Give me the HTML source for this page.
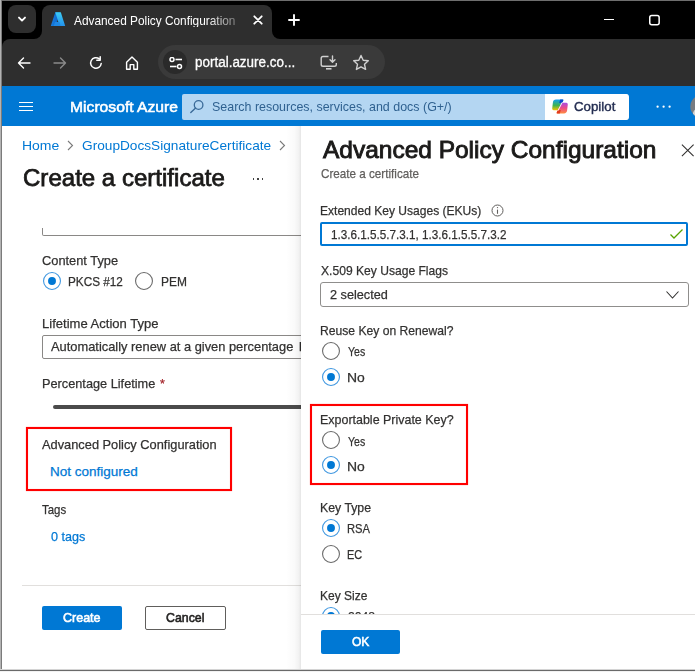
<!DOCTYPE html>
<html><head><meta charset="utf-8">
<style>
*{box-sizing:border-box;margin:0;padding:0}
html,body{width:695px;height:672px;overflow:hidden;background:#fff;font-family:"Liberation Sans",sans-serif;position:relative}
.a{position:absolute}
.t{position:absolute;white-space:nowrap;line-height:1;transform-origin:0 0}
</style></head><body>
<div class="a" style="left:0px;top:0px;width:695px;height:86px;background:#000"></div>
<div class="a" style="left:8px;top:5px;width:28px;height:28px;background:#2e2e2e;border-radius:8px"></div>
<svg class="a" style="left:16px;top:13px;" width="12" height="12" viewBox="0 0 12 12"><path d="M3 4.6 L6 7.6 L9 4.6" stroke="#fff" stroke-width="1.9" fill="none" stroke-linecap="round" stroke-linejoin="round"/></svg>
<div class="a" style="left:2px;top:39px;width:693px;height:47px;background:#2e2e2e;border-top-left-radius:8px"></div>
<div class="a" style="left:42px;top:5px;width:230px;height:40px;background:#2e2e2e;border-radius:8px 8px 0 0"></div>
<div class="a" style="left:34px;top:31px;width:8px;height:8px;background:#2e2e2e"></div>
<div class="a" style="left:34px;top:31px;width:8px;height:8px;background:#000;border-bottom-right-radius:8px"></div>
<div class="a" style="left:272px;top:31px;width:8px;height:8px;background:#2e2e2e"></div>
<div class="a" style="left:272px;top:31px;width:8px;height:8px;background:#000;border-bottom-left-radius:8px"></div>
<svg class="a" style="left:50px;top:12px;" width="16" height="15" viewBox="0 0 16 15"><defs><linearGradient id="g1" x1="0" y1="0" x2="1" y2="0"><stop offset="0" stop-color="#1a7fe0"/><stop offset="1" stop-color="#0a5cc2"/></linearGradient><linearGradient id="g2" x1="0" y1="0" x2="0" y2="1"><stop offset="0" stop-color="#3ccbf4"/><stop offset="1" stop-color="#2492eb"/></linearGradient></defs><path d="M0.8 14 L5.3 0.3 L10 0.3 L5.8 14 Z" fill="url(#g1)"/><path d="M5.3 0.3 L10.8 0.3 L15.2 14 L9.6 14 Z" fill="url(#g2)"/><path d="M5 10 L9.5 10 L10.6 14 L3.6 14 Z" fill="#1e88e5"/></svg>
<div class="t" style="left:74.20px;top:14px;font-size:13px;font-weight:normal;color:#ffffff;transform:scaleX(0.9119);-webkit-mask-image:linear-gradient(90deg,#000 82%,rgba(0,0,0,.35) 100%);">Advanced Policy Configuration</div>
<svg class="a" style="left:253px;top:15px;" width="10" height="10" viewBox="0 0 10 10"><path d="M1.3 1.3 L8.7 8.7 M8.7 1.3 L1.3 8.7" stroke="#fff" stroke-width="1.8" stroke-linecap="round"/></svg>
<svg class="a" style="left:288px;top:14px;" width="12" height="12" viewBox="0 0 12 12"><path d="M6 1 V11 M1 6 H11" stroke="#fff" stroke-width="1.9" stroke-linecap="round"/></svg>
<div class="a" style="left:604px;top:19px;width:10px;height:1px;background:#fff"></div>
<svg class="a" style="left:648px;top:14px;" width="13" height="12" viewBox="0 0 13 12"><rect x="1.75" y="1.45" width="9.4" height="9.3" rx="2" stroke="#fff" stroke-width="1.5" fill="none"/></svg>
<svg class="a" style="left:17px;top:56px;" width="14" height="14" viewBox="0 0 14 14"><path d="M13 7 H1.5 M6.5 2 L1.5 7 L6.5 12" stroke="#fff" stroke-width="1.4" fill="none" stroke-linecap="round" stroke-linejoin="round"/></svg>
<svg class="a" style="left:53px;top:56px;" width="14" height="14" viewBox="0 0 14 14"><path d="M1 7 H12.5 M7.5 2 L12.5 7 L7.5 12" stroke="#8a8a8a" stroke-width="1.4" fill="none" stroke-linecap="round" stroke-linejoin="round"/></svg>
<svg class="a" style="left:89px;top:56px;" width="14" height="14" viewBox="0 0 14 14"><path d="M12.2 7.5 A5.3 5.3 0 1 1 10.3 2.9" stroke="#fff" stroke-width="1.5" fill="none" stroke-linecap="round"/><path d="M11.2 0.8 V4.2 H7.8" stroke="#fff" stroke-width="1.5" fill="none" stroke-linecap="round" stroke-linejoin="round"/></svg>
<svg class="a" style="left:124px;top:56px;" width="15" height="14" viewBox="0 0 15 14"><path d="M2.6 6.2 L8 1 L13.4 6.2 V13.2 H9.8 V8.6 H6.2 V13.2 H2.6 Z" stroke="#fff" stroke-width="1.4" fill="none" stroke-linejoin="round"/></svg>
<div class="a" style="left:158px;top:45px;width:227px;height:34px;background:#3a3a3a;border-radius:17px"></div>
<div class="a" style="left:163px;top:50px;width:24px;height:24px;background:#2a2a2a;border-radius:12px"></div>
<svg class="a" style="left:168.7px;top:56.7px;" width="14" height="13" viewBox="0 0 14 13"><circle cx="3" cy="2.5" r="2" stroke="#fff" stroke-width="1.5" fill="none"/><path d="M6.5 2.5 H13" stroke="#fff" stroke-width="1.6"/><circle cx="10.5" cy="9.5" r="2" stroke="#fff" stroke-width="1.5" fill="none"/><path d="M1 9.5 H7.5" stroke="#fff" stroke-width="1.6"/></svg>
<div class="t" style="left:195.40px;top:55px;font-size:14px;font-weight:normal;color:#ffffff;-webkit-text-stroke:0.3px #ffffff;transform:scaleX(0.9606);">portal.azure.co...</div>
<svg class="a" style="left:320px;top:55px;" width="18" height="15" viewBox="0 0 18 15"><path d="M8.5 1.5 H3 Q1.2 1.5 1.2 3.3 V9.5 Q1.2 11.3 3 11.3 H14.5 Q16.3 11.3 16.3 9.5 V8" stroke="#d0d0d0" stroke-width="1.4" fill="none"/><path d="M12.5 1 V7 M10 4.8 L12.5 7.3 L15 4.8" stroke="#d0d0d0" stroke-width="1.4" fill="none" stroke-linecap="round" stroke-linejoin="round"/><path d="M6 13.8 H11.5" stroke="#d0d0d0" stroke-width="1.6"/></svg>
<svg class="a" style="left:352px;top:54px;" width="18" height="17" viewBox="0 0 18 17"><path d="M9 1.5 L11.2 6.3 L16.3 6.8 L12.5 10.3 L13.6 15.4 L9 12.8 L4.4 15.4 L5.5 10.3 L1.7 6.8 L6.8 6.3 Z" stroke="#d0d0d0" stroke-width="1.4" fill="none" stroke-linejoin="round"/></svg>
<div class="a" style="left:2px;top:86px;width:693px;height:40px;background:#0078d4"></div>
<div class="a" style="left:19px;top:102px;width:14px;height:1.3px;background:#fff"></div>
<div class="a" style="left:19px;top:106px;width:14px;height:1.3px;background:#fff"></div>
<div class="a" style="left:19px;top:110px;width:14px;height:1.3px;background:#fff"></div>
<div class="t" style="left:70.15px;top:99px;font-size:15px;font-weight:normal;color:#ffffff;-webkit-text-stroke:0.55px #ffffff;transform:scaleX(1.0451);">Microsoft Azure</div>
<div class="a" style="left:182px;top:94px;width:446px;height:26px;background:#b4d6f2;border-radius:2px"></div>
<div class="a" style="left:545px;top:94px;width:84px;height:26px;background:#fff;border-radius:0 3px 3px 0"></div>
<svg class="a" style="left:189px;top:99px;" width="16" height="16" viewBox="0 0 16 16"><circle cx="9.6" cy="6" r="4.3" stroke="#3a6a98" stroke-width="1.3" fill="none"/><path d="M6.6 9 L1.8 13.6" stroke="#3a6a98" stroke-width="1.4" stroke-linecap="round"/></svg>
<div class="t" style="left:212.28px;top:100px;font-size:13.5px;font-weight:normal;color:#2f6190;transform:scaleX(0.9220);">Search resources, services, and docs (G+/)</div>
<svg class="a" style="left:548px;top:96px;" width="24" height="22" viewBox="0 0 24 22"><defs><linearGradient id="c1" x1="0" y1="0" x2="0" y2="1"><stop offset="0" stop-color="#139ff0"/><stop offset="0.55" stop-color="#3fb34f"/><stop offset="1" stop-color="#f4c300"/></linearGradient><linearGradient id="c2" x1="0" y1="0" x2="0" y2="1"><stop offset="0" stop-color="#a84ce2"/><stop offset="0.5" stop-color="#ec4c86"/><stop offset="1" stop-color="#ff8b40"/></linearGradient></defs><path d="M8 3.6 L14.6 3.6 Q15.8 3.6 15.2 4.8 L10.8 13.6 Q10.4 14.2 9.6 14.2 L5.6 14.2 Q4.1 14.2 4.2 12.6 L4.9 6.4 Q5.3 3.6 8 3.6 Z" fill="url(#c1)"/><path d="M12.2 3.6 H14.6 Q15.8 3.6 15.2 4.8 L14.1 7 H11.2 Z" fill="#0a45cc"/><path d="M16 17.4 L9.4 17.4 Q8.2 17.4 8.8 16.2 L13.2 7.4 Q13.6 6.8 14.4 6.8 L18.4 6.8 Q19.9 6.8 19.8 8.4 L19.1 14.6 Q18.7 17.4 16 17.4 Z" fill="url(#c2)"/><path d="M11.8 17.4 H9.4 Q8.2 17.4 8.8 16.2 L9.9 14 H12.8 Z" fill="#e23c1c"/><path d="M14.3 6.2 L9.9 14.8" stroke="#fff" stroke-width="0.9"/></svg>
<div class="t" style="left:573.50px;top:100px;font-size:13.5px;font-weight:normal;color:#242e52;-webkit-text-stroke:0.4px #242e52;transform:scaleX(0.9837);">Copilot</div>
<svg class="a" style="left:650px;top:100px;" width="26" height="14" viewBox="0 0 26 14"><circle cx="7.6" cy="6.65" r="1.15" fill="#fff"/><circle cx="13.6" cy="6.65" r="1.15" fill="#fff"/><circle cx="19.6" cy="6.65" r="1.15" fill="#fff"/></svg>
<svg class="a" style="left:688px;top:93px;" width="27" height="27" viewBox="0 0 27 27"><defs><clipPath id="av"><circle cx="13.7" cy="13.5" r="11.4"/></clipPath></defs><circle cx="13.7" cy="13.5" r="11.4" fill="#777b81"/><ellipse cx="8.5" cy="21" rx="3.6" ry="4.6" fill="#d4d4d4" clip-path="url(#av)"/></svg>
<div class="t" style="left:21.71px;top:139px;font-size:13.5px;font-weight:normal;color:#0078d4;transform:scaleX(1.0357);">Home</div>
<svg class="a" style="left:66px;top:140px;" width="9" height="11" viewBox="0 0 9 11"><path d="M2 1 L6.5 5.5 L2 10" stroke="#7a7a7a" stroke-width="1.1" fill="none"/></svg>
<div class="t" style="left:81.90px;top:139px;font-size:13.5px;font-weight:normal;color:#0078d4;transform:scaleX(1.0123);">GroupDocsSignatureCertificate</div>
<svg class="a" style="left:278px;top:140px;" width="9" height="11" viewBox="0 0 9 11"><path d="M2 1 L6.5 5.5 L2 10" stroke="#7a7a7a" stroke-width="1.1" fill="none"/></svg>
<div class="t" style="left:23.20px;top:167px;font-size:23.5px;font-weight:normal;color:#1b1a19;-webkit-text-stroke:0.75px #1b1a19;transform:scaleX(1.0234);">Create a certificate</div>
<div class="a" style="left:252.5px;top:178px;width:1.5px;height:1.5px;background:#444"></div>
<div class="a" style="left:257px;top:178px;width:1.5px;height:1.5px;background:#444"></div>
<div class="a" style="left:261.5px;top:178px;width:1.5px;height:1.5px;background:#444"></div>
<div class="a" style="left:42px;top:228px;width:300px;height:8px;border:1px solid #8a8886;border-top:none;border-radius:0 0 2px 2px"></div>
<div class="t" style="left:42.20px;top:254px;font-size:13.5px;font-weight:normal;color:#323130;-webkit-text-stroke:0.25px #323130;transform:scaleX(0.9500);">Content Type</div>
<svg class="a" style="left:42px;top:271px;" width="20" height="20" viewBox="0 0 20 20"><circle cx="10" cy="10" r="8.45" stroke="#3f97e0" stroke-width="1.1" fill="#fff"/><circle cx="10" cy="10" r="3.95" fill="#0078d4"/></svg>
<div class="t" style="left:68.33px;top:275px;font-size:13.5px;font-weight:normal;color:#323130;-webkit-text-stroke:0.25px #323130;transform:scaleX(0.8710);">PKCS #12</div>
<svg class="a" style="left:133.7px;top:271px;" width="20" height="20" viewBox="0 0 20 20"><circle cx="10" cy="10" r="8.45" stroke="#6a6a6a" stroke-width="1.1" fill="#fff"/></svg>
<div class="t" style="left:160.71px;top:275px;font-size:13.5px;font-weight:normal;color:#323130;-webkit-text-stroke:0.25px #323130;transform:scaleX(0.8857);">PEM</div>
<div class="t" style="left:41.53px;top:317px;font-size:13.5px;font-weight:normal;color:#323130;-webkit-text-stroke:0.25px #323130;transform:scaleX(0.9658);">Lifetime Action Type</div>
<div class="a" style="left:42px;top:335px;width:300px;height:24px;border:1px solid #8a8886;border-radius:2px"></div>
<div class="t" style="left:50.90px;top:340px;font-size:13.5px;font-weight:normal;color:#323130;-webkit-text-stroke:0.25px #323130;transform:scaleX(0.9525);">Automatically renew at a given percentage</div>
<div class="t" style="left:298.50px;top:340px;font-size:13.5px;font-weight:normal;color:#323130;-webkit-text-stroke:0.25px #323130;transform:scaleX(0.9651);">lifetime</div>
<div class="t" style="left:41.56px;top:377px;font-size:13.5px;font-weight:normal;color:#323130;-webkit-text-stroke:0.25px #323130;transform:scaleX(0.9437);">Percentage Lifetime</div>
<div class="t" style="left:159.50px;top:377px;font-size:13.5px;font-weight:normal;color:#a4262c;-webkit-text-stroke:0.25px #a4262c;transform:scaleX(0.9167);">*</div>
<div class="a" style="left:53px;top:405px;width:260px;height:4px;background:#4b4b4b;border-radius:2px"></div>
<div class="a" style="left:26px;top:427px;width:206px;height:64px;border:2px solid #ff0000;box-shadow:0 0 0.8px rgba(255,0,0,.7),inset 0 0 0.8px rgba(255,0,0,.7)"></div>
<div class="t" style="left:42.20px;top:438px;font-size:13.5px;font-weight:normal;color:#323130;-webkit-text-stroke:0.25px #323130;transform:scaleX(0.9495);">Advanced Policy Configuration</div>
<div class="t" style="left:50.00px;top:465px;font-size:13.5px;font-weight:normal;color:#0078d4;-webkit-text-stroke:0.25px #0078d4;">Not configured</div>
<div class="t" style="left:42.20px;top:503px;font-size:13.5px;font-weight:normal;color:#323130;-webkit-text-stroke:0.25px #323130;transform:scaleX(0.8483);">Tags</div>
<div class="t" style="left:51.00px;top:530px;font-size:13.5px;font-weight:normal;color:#0078d4;-webkit-text-stroke:0.25px #0078d4;transform:scaleX(0.9324);">0 tags</div>
<div class="a" style="left:22px;top:585px;width:290px;height:1px;background:#e1dfdd"></div>
<div class="a" style="left:42px;top:606px;width:80px;height:24px;background:#0078d4;border-radius:2px"></div>
<div class="t" style="left:63.40px;top:611px;font-size:13.5px;font-weight:normal;color:#ffffff;-webkit-text-stroke:0.6px #ffffff;transform:scaleX(0.9268);">Create</div>
<div class="a" style="left:145px;top:606px;width:81px;height:24px;border:1px solid #605e5c;border-radius:2px;background:#fff"></div>
<div class="t" style="left:166.20px;top:611px;font-size:13.5px;font-weight:normal;color:#201f1e;-webkit-text-stroke:0.6px #201f1e;transform:scaleX(0.9143);">Cancel</div>
<div class="a" style="left:286px;top:126px;width:15px;height:545px;background:linear-gradient(90deg,rgba(0,0,0,0) 0%,rgba(0,0,0,.02) 55%,rgba(0,0,0,.05) 85%,rgba(0,0,0,.10) 100%)"></div>
<div class="a" style="left:301px;top:126px;width:394px;height:545px;background:#fff"></div>
<div class="t" style="left:322.52px;top:138px;font-size:24px;font-weight:normal;color:#1b1a19;-webkit-text-stroke:0.9px #1b1a19;transform:scaleX(1.0199);">Advanced Policy Configuration</div>
<svg class="a" style="left:680px;top:144px;" width="15" height="14" viewBox="0 0 15 14"><path d="M1.9 0.7 L13.6 12.1 M13.6 0.7 L1.9 12.1" stroke="#323130" stroke-width="1.1"/></svg>
<div class="t" style="left:321.00px;top:167px;font-size:13.5px;font-weight:normal;color:#605e5c;-webkit-text-stroke:0.25px #605e5c;transform:scaleX(0.8646);">Create a certificate</div>
<div class="t" style="left:320.41px;top:204px;font-size:13.5px;font-weight:normal;color:#323130;-webkit-text-stroke:0.25px #323130;transform:scaleX(0.8922);">Extended Key Usages (EKUs)</div>
<svg class="a" style="left:491px;top:204px;" width="13" height="13" viewBox="0 0 13 13"><circle cx="6.5" cy="6.5" r="5.5" stroke="#605e5c" stroke-width="1" fill="none"/><path d="M6.5 5.6 V9.8" stroke="#605e5c" stroke-width="1.1"/><circle cx="6.5" cy="3.6" r="0.7" fill="#605e5c"/></svg>
<div class="a" style="left:320px;top:222px;width:368px;height:24px;border:2px solid #0078d4;border-radius:2px"></div>
<div class="t" style="left:330.50px;top:228px;font-size:13.5px;font-weight:normal;color:#323130;-webkit-text-stroke:0.25px #323130;transform:scaleX(0.8665);">1.3.6.1.5.5.7.3.1, 1.3.6.1.5.5.7.3.2</div>
<svg class="a" style="left:669px;top:228px;" width="15" height="12" viewBox="0 0 15 12"><path d="M1.5 6.5 L5 10 L13.5 1.5" stroke="#57a300" stroke-width="1.3" fill="none"/></svg>
<div class="t" style="left:320.80px;top:264px;font-size:13.5px;font-weight:normal;color:#323130;-webkit-text-stroke:0.25px #323130;transform:scaleX(0.8958);">X.509 Key Usage Flags</div>
<div class="a" style="left:320px;top:282px;width:369px;height:25px;border:1px solid #8f8e8c;border-radius:3px"></div>
<div class="t" style="left:329.50px;top:288px;font-size:13.5px;font-weight:normal;color:#323130;-webkit-text-stroke:0.25px #323130;transform:scaleX(0.9393);">2 selected</div>
<svg class="a" style="left:665px;top:290px;" width="15" height="10" viewBox="0 0 15 10"><path d="M1.5 1.5 L7.5 8 L13.5 1.5" stroke="#323130" stroke-width="1.1" fill="none"/></svg>
<div class="t" style="left:319.90px;top:324px;font-size:13.5px;font-weight:normal;color:#323130;-webkit-text-stroke:0.25px #323130;transform:scaleX(0.8986);">Reuse Key on Renewal?</div>
<svg class="a" style="left:320.5px;top:340.8px;" width="20" height="20" viewBox="0 0 20 20"><circle cx="10" cy="10" r="8.45" stroke="#6a6a6a" stroke-width="1.1" fill="#fff"/></svg>
<div class="t" style="left:348.40px;top:345px;font-size:13.5px;font-weight:normal;color:#323130;-webkit-text-stroke:0.25px #323130;transform:scaleX(0.7818);">Yes</div>
<svg class="a" style="left:320.5px;top:367.1px;" width="20" height="20" viewBox="0 0 20 20"><circle cx="10" cy="10" r="8.45" stroke="#3f97e0" stroke-width="1.1" fill="#fff"/><circle cx="10" cy="10" r="3.95" fill="#0078d4"/></svg>
<div class="t" style="left:346.97px;top:371px;font-size:13.5px;font-weight:normal;color:#323130;-webkit-text-stroke:0.25px #323130;transform:scaleX(1.0312);">No</div>
<div class="a" style="left:310px;top:404px;width:158px;height:81px;border:2px solid #ff0000;box-shadow:0 0 0.8px rgba(255,0,0,.7),inset 0 0 0.8px rgba(255,0,0,.7)"></div>
<div class="t" style="left:320.28px;top:413px;font-size:13.5px;font-weight:normal;color:#323130;-webkit-text-stroke:0.25px #323130;transform:scaleX(0.9229);">Exportable Private Key?</div>
<svg class="a" style="left:320.5px;top:430px;" width="20" height="20" viewBox="0 0 20 20"><circle cx="10" cy="10" r="8.45" stroke="#6a6a6a" stroke-width="1.1" fill="#fff"/></svg>
<div class="t" style="left:348.00px;top:435px;font-size:13.5px;font-weight:normal;color:#323130;-webkit-text-stroke:0.25px #323130;transform:scaleX(0.7818);">Yes</div>
<svg class="a" style="left:320.5px;top:455.3px;" width="20" height="20" viewBox="0 0 20 20"><circle cx="10" cy="10" r="8.45" stroke="#3f97e0" stroke-width="1.1" fill="#fff"/><circle cx="10" cy="10" r="3.95" fill="#0078d4"/></svg>
<div class="t" style="left:346.97px;top:460px;font-size:13.5px;font-weight:normal;color:#323130;-webkit-text-stroke:0.25px #323130;transform:scaleX(1.0312);">No</div>
<div class="t" style="left:320.19px;top:501px;font-size:13.5px;font-weight:normal;color:#323130;-webkit-text-stroke:0.25px #323130;transform:scaleX(0.9109);">Key Type</div>
<svg class="a" style="left:320.6px;top:517.65px;" width="20" height="20" viewBox="0 0 20 20"><circle cx="10" cy="10" r="8.45" stroke="#3f97e0" stroke-width="1.1" fill="#fff"/><circle cx="10" cy="10" r="3.95" fill="#0078d4"/></svg>
<div class="t" style="left:347.37px;top:522px;font-size:13.5px;font-weight:normal;color:#323130;-webkit-text-stroke:0.25px #323130;transform:scaleX(0.8296);">RSA</div>
<svg class="a" style="left:320.6px;top:543.9px;" width="20" height="20" viewBox="0 0 20 20"><circle cx="10" cy="10" r="8.45" stroke="#6a6a6a" stroke-width="1.1" fill="#fff"/></svg>
<div class="t" style="left:347.19px;top:548px;font-size:13.5px;font-weight:normal;color:#323130;-webkit-text-stroke:0.25px #323130;transform:scaleX(0.8056);">EC</div>
<div class="t" style="left:320.11px;top:589px;font-size:13.5px;font-weight:normal;color:#323130;-webkit-text-stroke:0.25px #323130;transform:scaleX(0.8885);">Key Size</div>
<svg class="a" style="left:320.6px;top:606px;" width="20" height="20" viewBox="0 0 20 20"><circle cx="10" cy="10" r="8.45" stroke="#3f97e0" stroke-width="1.1" fill="#fff"/><circle cx="10" cy="10" r="3.95" fill="#0078d4"/></svg>
<div class="t" style="left:348.00px;top:610px;font-size:13.5px;font-weight:normal;color:#323130;-webkit-text-stroke:0.25px #323130;transform:scaleX(0.9000);">2048</div>
<div class="a" style="left:301px;top:614px;width:394px;height:57px;background:#fff;border-top:1px solid #e1dfdd"></div>
<div class="a" style="left:321px;top:630px;width:79px;height:24px;background:#0078d4;border-radius:2px"></div>
<div class="t" style="left:352.00px;top:635px;font-size:13.5px;font-weight:normal;color:#ffffff;-webkit-text-stroke:0.6px #ffffff;transform:scaleX(0.8900);">OK</div>
<div class="a" style="left:0px;top:0px;width:695px;height:1px;background:#6e6e6e"></div>
<div class="a" style="left:0px;top:0px;width:1px;height:672px;background:#b3b3b3"></div>
<div class="a" style="left:1px;top:0px;width:1px;height:672px;background:#7b7b7b"></div>
<div class="a" style="left:0px;top:669px;width:695px;height:1px;background:#d4d4d4"></div>
<div class="a" style="left:0px;top:670px;width:695px;height:1px;background:#6a6a6a"></div>
<div class="a" style="left:0px;top:671px;width:695px;height:1px;background:#f2f2f2"></div>
</body></html>
